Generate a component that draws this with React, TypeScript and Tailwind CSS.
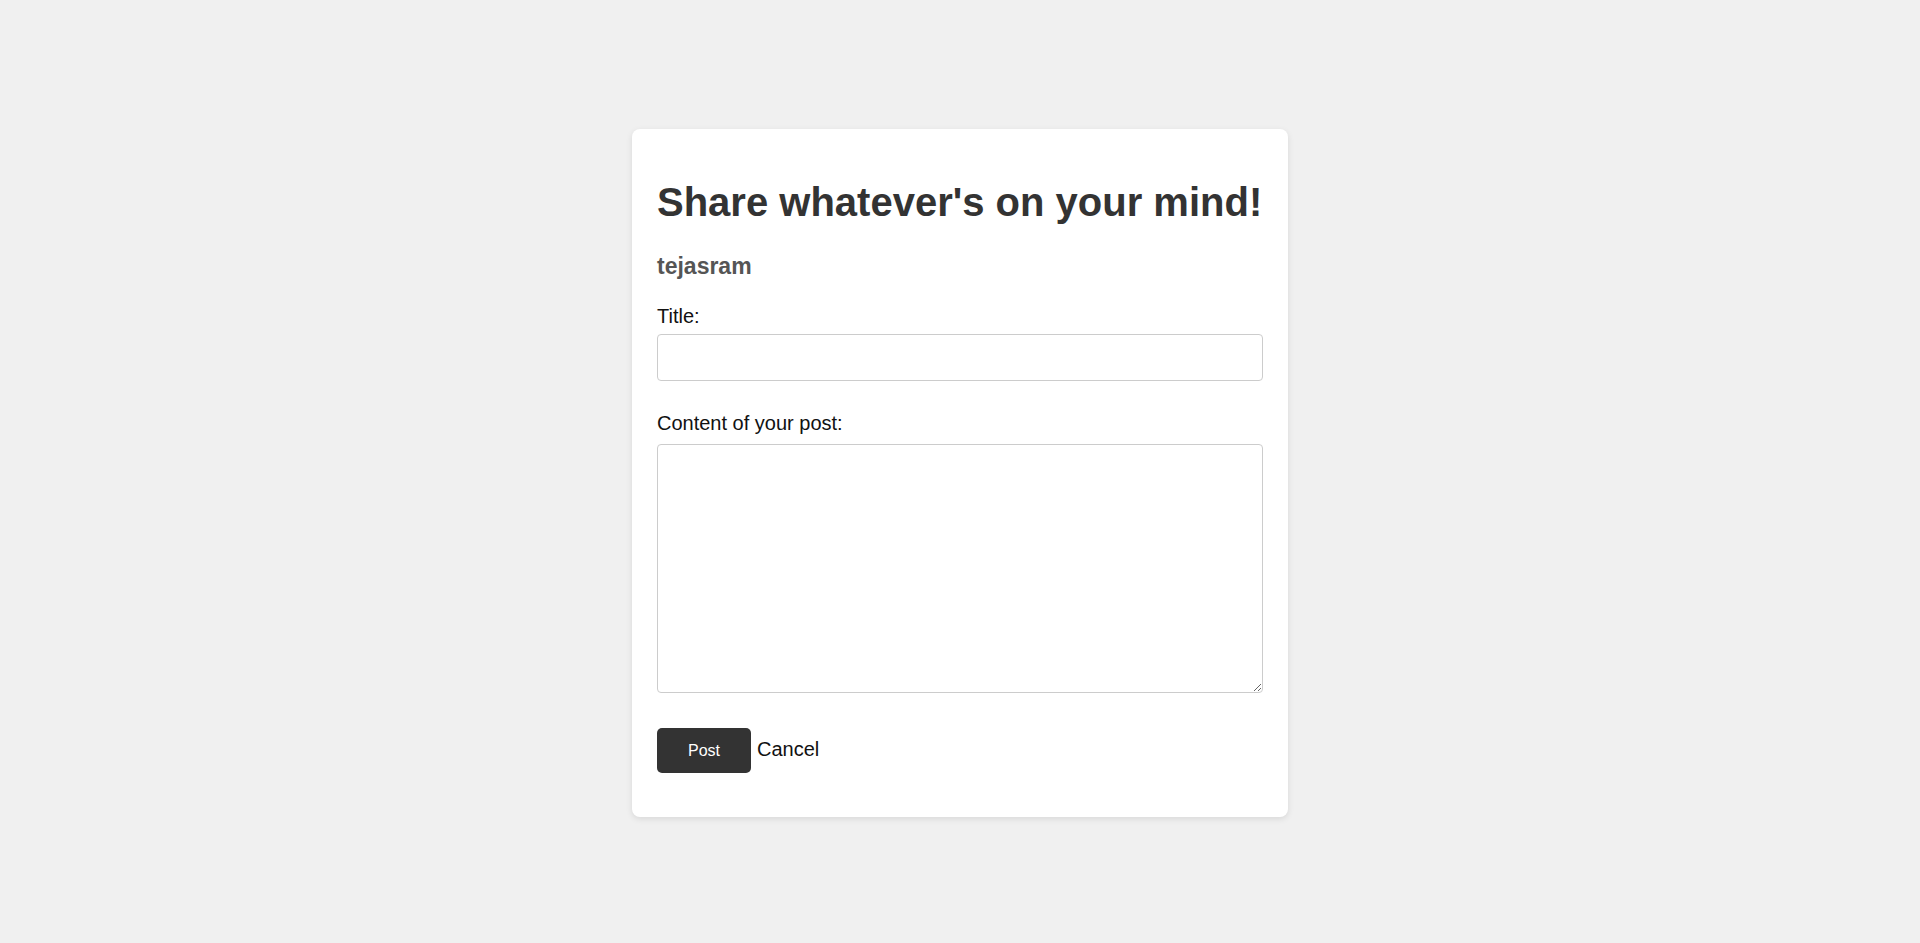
export default function App() {
  return (
    <div className="min-h-screen bg-[#f0f0f0] flex justify-center pt-[129px] font-['Liberation_Sans',Arial,sans-serif]">
      <div className="w-[656px] h-[688px] bg-white rounded-lg shadow-[0_2px_6px_rgba(0,0,0,0.1)] px-[25px] pt-[25px]">
        <h1 className="mt-[25px] text-[40px] leading-[46px] font-bold text-[#333]">
          Share whatever's on your mind!
        </h1>
        <h3 className="mt-[28px] text-[23px] leading-[26px] font-bold text-[#555]">tejasram</h3>

        <form onSubmit={(e) => e.preventDefault()}>
          <label className="block mt-[26px] text-[20px] leading-[23px] text-[#111]">Title:</label>
          <input
            type="text"
            className="block mt-[6px] w-full h-[47px] border border-[#ccc] rounded px-2 text-base"
          />

          <label className="block mt-[31px] text-[20px] leading-[23px] text-[#111]">Content of your post:</label>
          <textarea className="block mt-[9px] w-full h-[249px] border border-[#ccc] rounded p-2 text-base" />

          <div className="flex items-baseline mt-[35px]">
            <button
              type="submit"
              className="w-[94px] h-[45px] bg-[#333] text-white text-base rounded-[5px]"
            >
              Post
            </button>
            <a href="#" className="ml-[6px] text-[20px] text-[#111]">
              Cancel
            </a>
          </div>
        </form>
      </div>
    </div>
  );
}
